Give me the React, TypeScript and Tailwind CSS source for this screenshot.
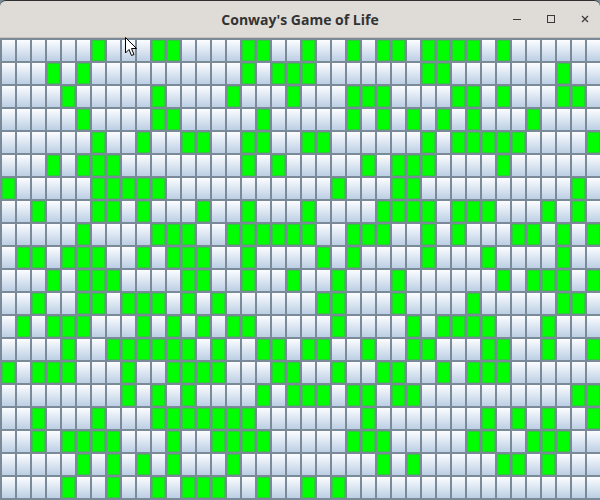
const ROWS: number[][] = [
  [6, 10, 11, 16, 17, 20, 23, 25, 26, 28, 29, 30, 31, 33],
  [3, 5, 16, 18, 19, 20, 28, 29, 37],
  [4, 10, 15, 19, 23, 24, 25, 30, 31, 33, 37, 38],
  [5, 10, 11, 17, 23, 25, 27, 29, 31, 35],
  [6, 9, 12, 13, 16, 17, 20, 21, 28, 30, 31, 32, 33, 34, 39],
  [3, 5, 6, 7, 16, 18, 24, 26, 27, 28, 33],
  [0, 6, 7, 8, 9, 10, 22, 26, 27, 38],
  [2, 6, 7, 9, 13, 16, 20, 25, 26, 27, 28, 30, 31, 32, 36, 38],
  [5, 10, 11, 12, 15, 16, 17, 18, 19, 20, 23, 24, 25, 28, 30, 34, 35, 37, 39],
  [1, 2, 4, 5, 6, 9, 11, 12, 13, 16, 21, 23, 28, 32, 37],
  [3, 5, 6, 7, 12, 13, 16, 19, 22, 26, 33, 35, 36, 37, 39],
  [2, 5, 6, 8, 9, 10, 12, 14, 21, 22, 26, 31, 37, 38],
  [1, 3, 4, 5, 9, 11, 13, 15, 16, 22, 27, 29, 30, 31, 32, 36],
  [4, 7, 8, 9, 10, 11, 12, 14, 17, 18, 20, 21, 24, 27, 28, 32, 33, 36, 39],
  [0, 2, 3, 4, 8, 11, 12, 13, 14, 18, 19, 22, 25, 26, 29, 31, 32, 33],
  [8, 10, 12, 17, 19, 20, 21, 23, 24, 26, 27, 38, 39],
  [2, 6, 10, 11, 12, 13, 14, 15, 16, 24, 32, 34, 36, 39],
  [2, 4, 5, 6, 7, 11, 14, 15, 16, 17, 23, 24, 25, 31, 32, 35, 36, 37],
  [5, 7, 9, 11, 15, 25, 27, 33, 34, 36],
  [4, 7, 10, 12, 13, 14, 17, 20, 22],
];

function Cell({ alive }: { alive: boolean }) {
  return (
    <div className="border border-[#7a8a99]">
      {alive ? (
        <div className="h-full border border-[#2ecb38] bg-[#00ff00]" />
      ) : (
        <div className="h-full bg-gradient-to-b from-[#fcfdff] to-[#bccfe4]" />
      )}
    </div>
  );
}

function TitleBar() {
  return (
    <div className="relative flex h-[38px] shrink-0 items-center justify-center rounded-t-[6px] border-t border-b border-t-[#2f2f2f] border-b-[#c9c2ba] bg-[#dfdcd7]">
      <span className="font-['Open_Sans',sans-serif] text-[14px] font-bold text-[#333333]">
        Conway's Game of Life
      </span>
      <div className="absolute top-0 right-0 flex h-full items-center">
        <div className="flex w-[30px] justify-center">
          <svg width="10" height="10" viewBox="0 0 10 10">
            <path d="M1 5.5H9" stroke="#3a3a3a" strokeWidth="1" />
          </svg>
        </div>
        <div className="flex w-[38px] justify-center">
          <svg width="10" height="10" viewBox="0 0 10 10">
            <rect x="1.5" y="1.5" width="7" height="7" fill="none" stroke="#3a3a3a" strokeWidth="1" />
          </svg>
        </div>
        <div className="flex w-[30px] justify-center">
          <svg width="10" height="10" viewBox="0 0 10 10">
            <path d="M2 2L8 8M8 2L2 8" stroke="#3a3a3a" strokeWidth="1.2" />
          </svg>
        </div>
      </div>
    </div>
  );
}

export default function App() {
  return (
    <div className="relative flex h-[500px] w-[600px] flex-col overflow-hidden bg-[#7a8a99]">
      <TitleBar />
      <div className="grid grid-cols-[repeat(40,15px)] grid-rows-[repeat(20,23px)] p-px">
        {ROWS.map((row, r) =>
          Array.from({ length: 40 }, (_, c) => <Cell key={`${r}-${c}`} alive={row.includes(c)} />)
        )}
      </div>
      {/* mouse pointer over the grid */}
      <svg className="absolute top-[37px] left-[125px]" width="13" height="21" viewBox="0 0 13 21">
        <path d="M0.5 0.5V16L4 12.5L6.5 18.5L9 17.5L6.5 11.5H11.5Z" fill="#fff" stroke="#000" strokeWidth="1" />
      </svg>
    </div>
  );
}
